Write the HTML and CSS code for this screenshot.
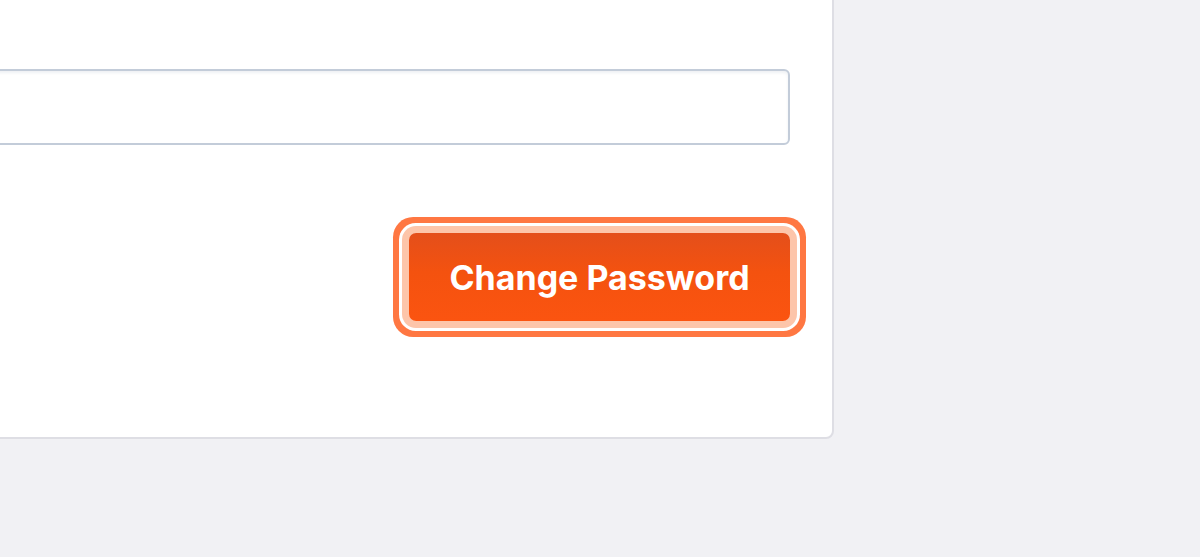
FILE: index.html
```html
<!DOCTYPE html>
<html lang="en">
<head>
<meta charset="utf-8">
<title>Change Password</title>
<link rel="stylesheet" href="styles.css">
</head>
<body>
<div class="page">
  <div class="card">
    <div class="field">
      <input class="input" type="password" aria-label="Confirm new password">
    </div>
    <div class="actions">
      <button class="btn" type="button">Change Password</button>
    </div>
  </div>
</div>
</body>
</html>
```

FILE: styles.css
```css
html, body {
  margin: 0;
  padding: 0;
  background: #f1f1f4;
  height: 100%;
  overflow: hidden;
}

.page {
  display: flex;
  justify-content: flex-start;
}

.card {
  box-sizing: border-box;
  width: 934px;
  margin-left: -100px;
  margin-top: -60px;
  padding: 127px 42px 116px 60px;
  background: #ffffff;
  border: 2px solid #dedee4;
  border-radius: 8px;
  display: flex;
  flex-direction: column;
  gap: 88px;
}

.field {
  display: flex;
}

.input {
  box-sizing: border-box;
  flex: 1;
  height: 76px;
  border: 2px solid #c3ccd9;
  border-radius: 6px;
  background: #ffffff;
  box-shadow: inset 0 2px 3px rgba(160, 170, 190, 0.18);
  outline: none;
  font-size: 28px;
}

.actions {
  display: flex;
  justify-content: flex-end;
}

.btn {
  box-sizing: border-box;
  width: 381px;
  height: 88px;
  margin-right: 0;
  border: none;
  border-radius: 7px;
  background: linear-gradient(180deg, #e44f1b 0%, #f4520f 45%, #fb5410 100%);
  color: #ffffff;
  font-family: Inter, "Open Sans", "Liberation Sans", sans-serif;
  font-weight: 700;
  font-size: 34px;
  letter-spacing: 0;
  box-shadow:
    0 0 0 7px #fdc5aa,
    0 0 0 10px #ffffff,
    0 0 0 16px #ff7742;
  cursor: pointer;
}
```
